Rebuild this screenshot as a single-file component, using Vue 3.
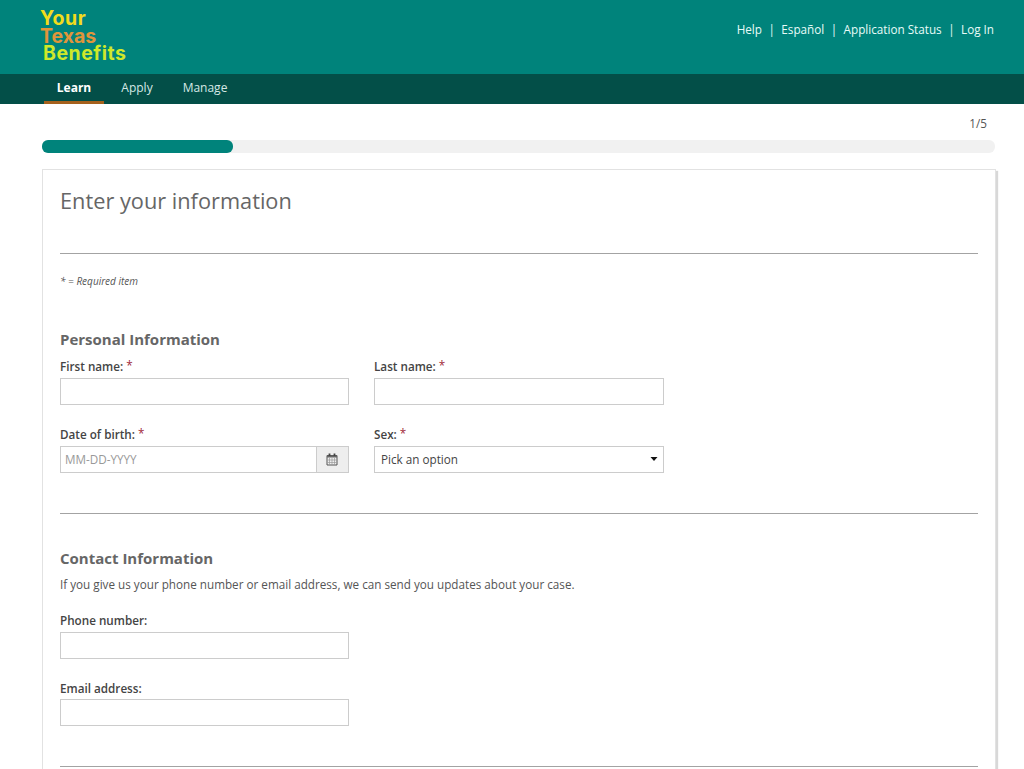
<template>
  <div class="page">
    <header class="header">
      <a class="logo" href="#" @click.prevent>
        <span class="logo-your">Your</span>
        <span class="logo-texas">Texas</span>
        <span class="logo-benefits">Benefits</span>
      </a>
      <div class="links">
        <template v-for="(link, i) in links" :key="link">
          <span v-if="i > 0">|</span>
          <a href="#" @click.prevent>{{ link }}</a>
        </template>
      </div>
    </header>

    <nav class="nav">
      <a
        v-for="tab in tabs"
        :key="tab"
        href="#"
        class="tab"
        :class="{ active: tab === activeTab }"
        @click.prevent="activeTab = tab"
      >{{ tab }}</a>
    </nav>

    <main class="main">
      <div class="step">{{ step }}/{{ total }}</div>
      <div class="progress">
        <div class="progress-bar" :style="{ width: (step / total) * 100 + '%' }"></div>
      </div>

      <form class="panel" @submit.prevent>
        <h1>Enter your information</h1>
        <hr />
        <p class="required">* = Required item</p>

        <section class="personal">
          <h2>Personal Information</h2>
          <div class="grid">
            <div class="field">
              <label for="first">First name: <i>*</i></label>
              <input id="first" v-model="form.first" type="text" />
            </div>
            <div class="field">
              <label for="last">Last name: <i>*</i></label>
              <input id="last" v-model="form.last" type="text" />
            </div>
            <div class="field">
              <label for="dob">Date of birth: <i>*</i></label>
              <div class="date">
                <input id="dob" v-model="form.dob" type="text" placeholder="MM-DD-YYYY" />
                <button type="button" aria-label="Calendar">
                  <svg width="12" height="13" viewBox="0 0 12 13">
                    <path d="M1 2.5h10v9.5H1z" fill="none" stroke="#555" />
                    <path d="M1 3.5h10" stroke="#666" stroke-width="2" />
                    <path d="M3.5 5v7M6 5v7M8.5 5v7M1 7h10M1 9.5h10" stroke="#999" stroke-width=".7" />
                    <path d="M3.5.5v2.6M8.5.5v2.6" stroke="#444" stroke-width="1.8" />
                  </svg>
                </button>
              </div>
            </div>
            <div class="field">
              <label for="sex">Sex: <i>*</i></label>
              <div class="select">
                <select id="sex" v-model="form.sex">
                  <option value="">Pick an option</option>
                </select>
                <svg class="caret" width="8" height="4" viewBox="0 0 8 4">
                  <path d="M.5 0h7L4 4z" fill="#111" />
                </svg>
              </div>
            </div>
          </div>
        </section>
        <hr />

        <section class="contact">
          <h2>Contact Information</h2>
          <p class="hint">If you give us your phone number or email address, we can send you updates about your case.</p>
          <div class="grid">
            <div class="field">
              <label for="phone">Phone number:</label>
              <input id="phone" v-model="form.phone" type="text" />
            </div>
            <div class="field email">
              <label for="email">Email address:</label>
              <input id="email" v-model="form.email" type="text" />
            </div>
          </div>
        </section>
        <hr />
      </form>
    </main>
  </div>
</template>

<script setup>
import { ref, reactive } from 'vue'

const links = ['Help', 'Español', 'Application Status', 'Log In']
const tabs = ['Learn', 'Apply', 'Manage']
const activeTab = ref('Learn')

const step = 1
const total = 5

const form = reactive({
  first: '',
  last: '',
  dob: '',
  sex: '',
  phone: '',
  email: ''
})
</script>

<style>
body {
  margin: 0;
  background: #fff;
}
</style>

<style scoped>
.page {
  height: 769px;
  overflow: hidden;
  font-family: "Open Sans", "Noto Sans", sans-serif;
  font-size: 11.7px;
  color: #555;
}

a {
  color: inherit;
  text-decoration: none;
}

.header {
  display: flex;
  justify-content: space-between;
  height: 74px;
  padding: 0 30px 0 40px;
  box-sizing: border-box;
  background: #00837b;
}

.logo {
  display: flex;
  flex-direction: column;
  padding-top: 10px;
  font-family: Inter, "Open Sans", sans-serif;
  font-size: 19.5px;
  font-weight: 700;
  line-height: 17.5px;
  letter-spacing: 0.5px;
}

.logo-your {
  color: #f2dc1c;
}

.logo-texas {
  letter-spacing: 0;
  color: #e0953a;
}

.logo-benefits {
  padding-left: 3px;
  color: #cfe82a;
}

.links {
  display: flex;
  gap: 6.5px;
  padding-top: 20px;
  line-height: 18px;
  color: #e8fbf8;
}

.nav {
  display: flex;
  height: 30px;
  padding-left: 44px;
  background: #034f48;
}

.tab {
  width: 60px;
  height: 30px;
  margin-right: 3px;
  box-sizing: border-box;
  line-height: 28px;
  text-align: center;
  font-size: 12px;
  color: #d5e8e5;
}

.tab:last-child {
  width: 70px;
}

.tab.active {
  border-bottom: 3px solid #a5611c;
  font-weight: 700;
  color: #fff;
}

.main {
  padding: 0 29px 0 42px;
}

.step {
  height: 36px;
  padding-right: 8px;
  line-height: 39px;
  text-align: right;
}

.progress {
  height: 12.5px;
  border-radius: 6px;
  background: #f1f1f1;
}

.progress-bar {
  height: 100%;
  border-radius: 6px;
  background: #00837b;
}

.panel {
  height: 640px;
  margin-top: 16.5px;
  margin-right: -1px;
  padding: 0 17px;
  box-sizing: border-box;
  border: 1px solid #e2e2e2;
  box-shadow: 2px 2px 1px #d8d8d8;
}

h1 {
  height: 83px;
  margin: 0;
  line-height: 62px;
  font-size: 21.75px;
  font-weight: 400;
  color: #666;
}

hr {
  height: 1px;
  margin: 0;
  border: 0;
  background: #a3a3a3;
}

.required {
  margin: 0;
  padding-top: 17px;
  line-height: 20px;
  font-size: 10px;
  font-style: italic;
}

h2 {
  margin: 0;
  line-height: 22px;
  font-size: 15px;
  font-weight: 700;
  color: #666;
}

.personal {
  height: 222px;
  padding-top: 37px;
  box-sizing: border-box;
}

.contact {
  height: 252px;
  padding-top: 33px;
  box-sizing: border-box;
}

.grid {
  display: grid;
  grid-template-columns: 289px 290px;
  column-gap: 25px;
  row-gap: 20px;
  padding-top: 7px;
}

.hint {
  margin: 0;
  padding: 4px 0 1px;
  line-height: 22px;
}

.contact .grid {
  grid-template-columns: 289px;
  row-gap: 19px;
  padding-top: 15px;
}

.field label {
  display: block;
  height: 21px;
  line-height: 19px;
  font-weight: 600;
  color: #444;
}

.email label {
  line-height: 21px;
}

.field i {
  position: relative;
  top: -1px;
  font-style: normal;
  font-weight: 400;
  color: #a12a3a;
}

input,
select {
  display: block;
  width: 100%;
  height: 27px;
  padding: 0 5px 2px;
  box-sizing: border-box;
  border: 1px solid #ccc;
  border-radius: 0;
  outline: 0;
  background: #fff;
  font: inherit;
  color: #444;
}

input::placeholder {
  color: #999;
}

.date {
  display: flex;
}

.date input {
  flex: 1;
  min-width: 0;
  padding: 0 4px 2px;
}

.date button {
  display: flex;
  align-items: center;
  justify-content: center;
  width: 32px;
  height: 27px;
  padding: 0 1px 1px 0;
  border: 1px solid #ccc;
  border-left: 0;
  background: #eee;
}

.select {
  position: relative;
}

select {
  appearance: none;
  padding: 0 6px 2px;
}

.caret {
  position: absolute;
  top: 11px;
  right: 6px;
}
</style>
